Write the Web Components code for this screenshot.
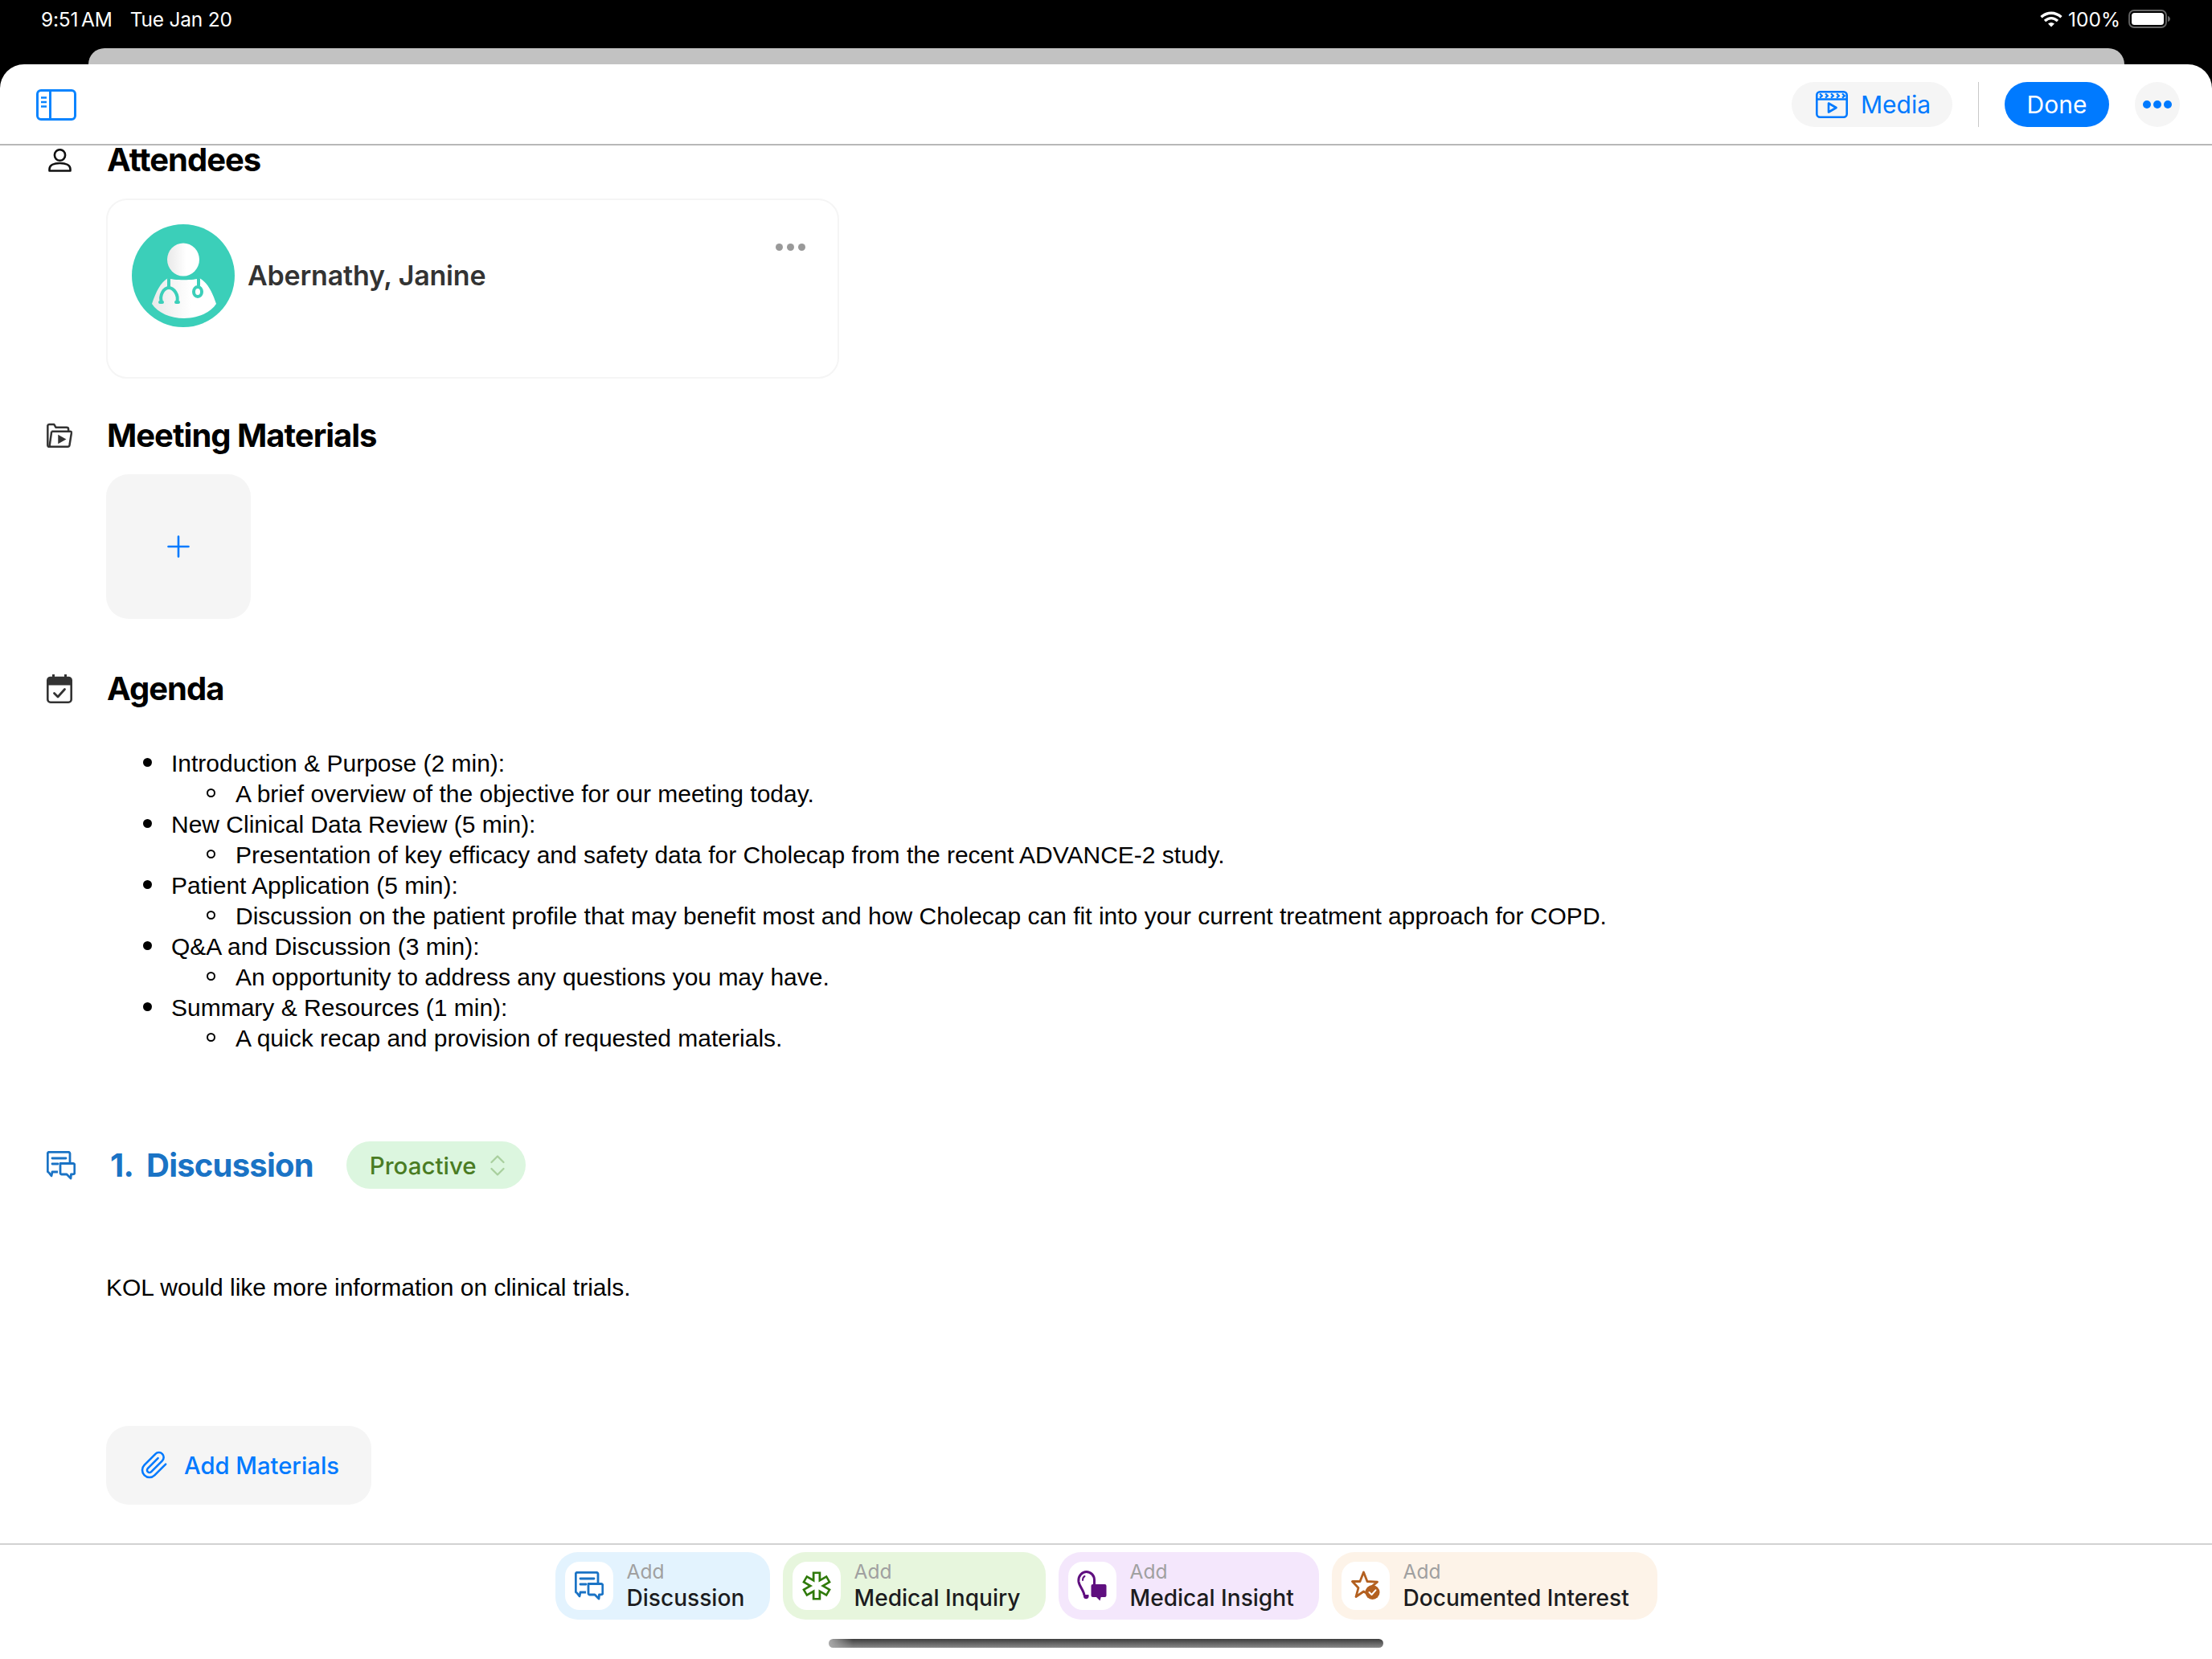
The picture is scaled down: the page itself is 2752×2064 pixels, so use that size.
<!DOCTYPE html>
<html><head><meta charset="utf-8"><title>Meeting</title>
<style>
html,body{margin:0;padding:0;background:#000}
body{width:2752px;height:2064px;overflow:hidden;font-family:Inter,"Liberation Sans",sans-serif}
app-page{display:flex}
</style></head><body>
<app-page>
  <status-bar></status-bar>
  <app-sheet>
    <app-toolbar></app-toolbar>
    <main-scroll>
      <section-head icon="person" style="height:36px;margin-top:0">Attendees</section-head>
      <attendee-card name="Abernathy, Janine"></attendee-card>
      <section-head icon="folder" style="margin-top:53px">Meeting Materials</section-head>
      <add-tile></add-tile>
      <section-head icon="calendar" style="margin-top:69px">Agenda</section-head>
      <agenda-list></agenda-list>
      <discussion-head></discussion-head>
      <note-text>KOL would like more information on clinical trials.</note-text>
      <add-materials></add-materials>
    </main-scroll>
    <add-bar></add-bar>
  </app-sheet>
</app-page>
<script>
const ICONS={
 person:'<svg width="29" height="29" viewBox="0 0 29 29" fill="none" stroke="#111" stroke-width="2.6"><ellipse cx="14.5" cy="8" rx="6.6" ry="6.8"/><path d="M1.5 27.5v-2c0-5 5.5-7.5 13-7.5s13 2.500 13 7.500v2z" stroke-linejoin="round"/></svg>',
 folder:'<svg width="36" height="34" viewBox="0 0 36 34" fill="none" stroke="#333" stroke-width="2.800" stroke-linejoin="round"><path d="M6 32.500H3.500A2 2 0 0 1 1.500 30.500V3A2 2 0 0 1 3.500 1.300H10.500L13 5.500H28A2.500 2.500 0 0 1 30.500 8V11"/><path d="M7 11H33A1.800 1.800 0 0 1 34.800 13L32 30.500A2.500 2.500 0 0 1 29.500 32.500H4.500"/><path d="M7 11L4 32" /><path d="M16 15.500L27.500 22L16 28.500Z" fill="#333" stroke="none"/></svg>',
 calendar:'<svg width="32" height="36" viewBox="0 0 32 36" fill="none"><rect x="1.300" y="4" width="29.400" height="30.700" rx="3.500" stroke="#333" stroke-width="2.600"/><path d="M1.300 13V7.500A3.500 3.500 0 0 1 4.800 4H27.200A3.500 3.500 0 0 1 30.700 7.500V13Z" fill="#333" stroke="#333" stroke-width="1"/><path d="M8.500 0.500V6M23.500 0.500V6" stroke="#333" stroke-width="3" stroke-linecap="round"/><path d="M9.500 23.500L14 28L22.500 18.500" stroke="#333" stroke-width="2.800" stroke-linecap="round" stroke-linejoin="round"/></svg>',
 chat:c=>`<svg style="display:block" width="36" height="36" viewBox="0 0 36 36" fill="none" stroke="${c}" stroke-width="2.800" stroke-linejoin="round"><path d="M14 26H7L6 31L2.500 26.500A1.500 1.500 0 0 1 1.300 25V3A2 2 0 0 1 3.300 1.300H27A2 2 0 0 1 29 3V14"/><path d="M7 9H24M7 16H14" stroke-linecap="round"/><path d="M17 15.500H33A1.800 1.800 0 0 1 34.800 17.300V27A1.800 1.800 0 0 1 33 28.800H30.500L30 34L25 29H19A1.800 1.800 0 0 1 17 27Z" fill="#fff" /></svg>`,
 star:'<svg width="36" height="40" viewBox="0 0 36 40"><path d="M15.500 3L20 14.500L32.500 15.200L23 23L26 33L15.500 27L6 33.500L9 22.500L1.500 14.500L11 14.500Z" fill="none" stroke="#b36020" stroke-width="2.800" stroke-linejoin="round"/><circle cx="26.500" cy="28" r="9" fill="#b36020"/><path d="M22.500 28L25.500 31L30.500 25.300" fill="none" stroke="#fff" stroke-width="2" stroke-linecap="round" stroke-linejoin="round"/></svg>',
 bulb:'<svg width="38" height="38" viewBox="0 0 38 38"><path d="M9 31C8.500 25 3 20 2 14C1 6 7 1.500 11.500 1.500C17 1.500 22 6 21.500 13V18" fill="none" stroke="#5f0f7f" stroke-width="3"/><path d="M9.500 7C7.500 8 7 10 7 12" fill="none" stroke="#5f0f7f" stroke-width="2" stroke-linecap="round"/><path d="M8 30H14.500V33A3.500 3.500 0 0 1 8 33Z" fill="#5f0f7f"/><rect x="17.500" y="17" width="19" height="16" rx="2" fill="#5f0f7f"/><path d="M23 32L28.500 37.500L30 32Z" fill="#5f0f7f"/></svg>',
 asterisk:'<svg width="36" height="36" viewBox="-18 -18 36 36" stroke-linecap="butt"><g stroke="#2f7a0a" stroke-width="10.500"><path d="M0-17.500V17.500M-15.200-8.800L15.200 8.800M-15.200 8.800L15.200-8.800"/></g><g stroke="#fff" stroke-width="5"><path d="M0-15V15M-13-7.500L13 7.500M-13 7.500L13-7.500"/></g></svg>'
};
function def(name,css,html){
  customElements.define(name,class extends HTMLElement{
    constructor(){super();const r=this.attachShadow({mode:'open'});
      r.innerHTML='<style>'+css+'</style>'+(typeof html==='function'?'':html);}
    connectedCallback(){
      if(typeof html==='function'){this.shadowRoot.innerHTML='<style>'+css+'</style>'+html(this)}
    }
  });
}
def('app-page',':host{display:flex;flex-direction:column;width:2752px;height:2064px;background:#000}','<slot></slot>');
def('status-bar',`:host{display:block;height:80px;flex:none;color:#fff;font:400 24.500px Inter,sans-serif}
 .row{height:60px;display:flex;align-items:flex-start;padding:11px 52px 0 51px;box-sizing:border-box}
 .t{line-height:27px;letter-spacing:-.2px;word-spacing:-3px}.d{margin-left:22px;line-height:27px;letter-spacing:-.2px}
 .sp{flex:1}.r{display:flex;align-items:center;height:25px}.p{margin:0 10px 0 7px;letter-spacing:0}
 .peek{height:20px;margin:0 109px 0 110px;background:#c2c2c2;border-radius:24px 24px 0 0}`,
 `<div class="row"><span class="t">9:51 AM</span><span class="d">Tue Jan 20</span><span class="sp"></span><span class="r">
 <svg width="28" height="20" viewBox="0 0 28 20" fill="none" stroke="#fff" stroke-width="3.400"><path d="M1.500 7.300C9 0.500 19 0.500 26.500 7.300M6 12C11 7.500 17 7.500 22 12"/><path d="M10 15.500L14 19.500L18 15.500C15.500 13.500 12.500 13.500 10 15.500Z" fill="#fff" stroke="none"/></svg>
 <span class="p">100%</span>
 <svg width="52" height="23" viewBox="0 0 52 23"><rect x="1" y="1" width="46" height="21" rx="6" fill="none" stroke="#666" stroke-width="1.800"/><rect x="4" y="4" width="40" height="15" rx="3.500" fill="#fff"/><path d="M49 8C51 8.500 52 10 52 11.500C52 13 51 14.500 49 15Z" fill="#666"/></svg></span></div><div class="peek"></div>`);
def('app-sheet',':host{display:flex;flex-direction:column;flex:1;min-height:0;background:#fff;border-radius:30px 30px 0 0;overflow:hidden}','<slot></slot>');
def('app-toolbar',`:host{display:flex;flex:none;box-sizing:border-box;height:101px;border-bottom:2px solid #b8b8b8;padding:22px 40px 0 45px;gap:32px;font:400 30px Inter,sans-serif;color:#007aff}
 .side{margin:9px auto 0 0;display:block}.pill{height:56px;box-sizing:border-box;display:flex;align-items:center;background:#f5f5f5;border-radius:28px}
 .media{width:200px;padding-left:30px;gap:16px}.div{width:1px;height:56px;background:#c9c9c9}.done{width:130px;background:#007aff;color:#fff;justify-content:center}
 .more{width:56px;justify-content:center;gap:3px}.more i{width:10px;height:10px;border-radius:50%;background:#007aff}`,
 `<svg class="side" width="50" height="39" viewBox="0 0 50 39" fill="none" stroke="#0a84ff" stroke-width="3"><rect x="1.500" y="1.500" width="47" height="36" rx="4.500"/><path d="M17.500 1.500V37.500"/><path d="M6 10.500H13M6 16H13M6 21.500H13" stroke-width="2.400"/></svg>
 <div class="pill media"><svg width="40" height="34" viewBox="0 0 40 34" fill="none" stroke="#007aff" stroke-width="2.600" stroke-linejoin="round"><rect x="1.300" y="1.300" width="37.400" height="31.400" rx="4"/><path d="M1.300 10.500H38.700"/><path d="M5 3.500L8 6.200L5 8.700M12 3.500L15 6.200L12 8.700M19 3.500L22 6.200L19 8.700M26 3.500L29 6.200L26 8.700M33 3.500L36 6.200L33 8.700" stroke-width="2.200"/><path d="M16 15.500L25.500 21L16 26.500Z"/></svg><span>Media</span></div>
 <div class="div"></div><div class="pill done">Done</div><div class="pill more"><i></i><i></i><i></i></div>`);
def('main-scroll',':host{display:flex;flex-direction:column;align-items:flex-start;flex:1;min-height:0;padding-left:132px;box-sizing:border-box}','<slot></slot>');
def('section-head',`:host{display:flex;align-items:center;position:relative;height:36px;padding-left:1px;font:700 40px/36px Inter,sans-serif;color:#000;letter-spacing:-1px}
 .i{position:absolute;left:-74px;top:0;width:32px;height:100%;display:flex;align-items:center;justify-content:center;letter-spacing:0}`,
 h=>`<span class="i">${ICONS[h.getAttribute('icon')]}</span><slot></slot>`);
def('attendee-card',`:host{display:flex;box-sizing:border-box;width:912px;height:224px;margin-top:30px;border:2px solid #f5f5f5;border-radius:26px;padding:30px 0 0 30px;position:relative}
 svg{display:block;flex:none}.n{margin:44px 0 0 16px;font:600 34px/40px Inter,sans-serif;color:#333;letter-spacing:-.2px}
 .m{position:absolute;right:40px;top:54px;display:flex;gap:5px}.m i{width:9px;height:9px;border-radius:50%;background:#999}`,
 h=>`<svg width="128" height="128" viewBox="0 0 128 128"><defs><linearGradient id="g" x1="0" x2="1"><stop offset="0" stop-color="#e9e9e9"/><stop offset=".6" stop-color="#fff"/></linearGradient></defs><circle cx="64" cy="64" r="64" fill="#3bcfb9"/><ellipse cx="64" cy="44" rx="20" ry="20.500" fill="url(#g)"/><path d="M45 67C36 72 30 84 25 99C32 110 48 117 65 117C82 117 98 110 105 99C100 84 94 72 84 67C80 70 50 70 45 67Z" fill="url(#g)"/><g fill="none" stroke="#3bcfb9" stroke-width="4" stroke-linecap="round"><path d="M46 68V79M83 68V76"/><path d="M37 97C34 88 40 79 46 79C52 79 59 88 56 97M35 97H38M55 97H58"/><ellipse cx="82" cy="84" rx="5" ry="6"/></g></svg>
 <div class="n">${h.getAttribute('name')}</div><div class="m"><i></i><i></i><i></i></div>`);
def('add-tile',`:host{display:flex;align-items:center;justify-content:center;width:180px;height:180px;margin-top:30px;background:#f5f5f5;border-radius:28px;margin-bottom:0}`,
 `<svg width="28" height="28" viewBox="0 0 28 28" stroke="#007aff" stroke-width="2.600" stroke-linecap="round"><path d="M14 1.500V26.500M1.500 14H26.500"/></svg>`);
def('agenda-list',`:host{display:block;margin-top:56px;font:400 30px/38px "Liberation Sans",Arial,sans-serif;color:#000}
 ul{margin:0;padding:0 0 0 81px;list-style:none}ul ul{padding-left:80px}
 li{position:relative}
 li::before{content:"";position:absolute;left:-35px;top:12px;width:11px;height:11px;border-radius:50%;background:#000}
 ul ul li::before{left:-36px;box-sizing:border-box;background:none;border:2px solid #000}`,
 `<ul>
 <li>Introduction &amp; Purpose (2 min):<ul><li>A brief overview of the objective for our meeting today.</li></ul></li>
 <li>New Clinical Data Review (5 min):<ul><li>Presentation of key efficacy and safety data for Cholecap from the recent ADVANCE-2 study.</li></ul></li>
 <li>Patient Application (5 min):<ul><li>Discussion on the patient profile that may benefit most and how Cholecap can fit into your current treatment approach for COPD.</li></ul></li>
 <li>Q&amp;A and Discussion (3 min):<ul><li>An opportunity to address any questions you may have.</li></ul></li>
 <li>Summary &amp; Resources (1 min):<ul><li>A quick recap and provision of requested materials.</li></ul></li>
 </ul>`);
def('discussion-head',`:host{display:flex;align-items:center;position:relative;height:59px;margin-top:109px;font:700 40px Inter,sans-serif;color:#1a73c5;letter-spacing:-.8px}
 .i{position:absolute;left:-74px;top:12px}.t{margin-left:5px;white-space:pre}.p{margin-left:41px;box-sizing:border-box;width:223px;height:59px;border-radius:30px;background:#dcf6df;color:#4a7c23;font:500 29.500px Inter,sans-serif;letter-spacing:0;display:flex;align-items:center;padding-left:29px;gap:17px}`,
 `<span class="i">${ICONS.chat('#1a73c5')}</span><span class="t">1.  Discussion</span><span class="p">Proactive<svg width="18" height="26" viewBox="0 0 18 26" fill="none" stroke="#a8cf9d" stroke-width="2.200" stroke-linecap="round" stroke-linejoin="round"><path d="M1.500 9L9 1.500L16.500 9M1.500 17L9 24.500L16.500 17"/></svg></span>`);
def('note-text',`:host{display:block;margin-top:104px;font:400 30px/38px "Liberation Sans",Arial,sans-serif;color:#000}`,'<slot></slot>');
def('add-materials',`:host{display:flex;align-items:center;width:330px;height:98px;box-sizing:border-box;margin-top:153px;background:#f5f5f5;border-radius:28px;padding-left:42px;gap:19px;color:#007aff;font:500 29.200px Inter,sans-serif}`,
 `<svg width="36" height="36" viewBox="0 0 24 24" fill="none" stroke="#007aff" stroke-width="1.700" stroke-linecap="round" stroke-linejoin="round"><path d="M21.440 11.050l-9.190 9.190a6 6 0 0 1-8.490-8.490l9.190-9.190a4 4 0 0 1 5.660 5.660l-9.200 9.190a2 2 0 0 1-2.830-2.830l8.490-8.480"/></svg><span>Add Materials</span>`);
def('add-bar',`:host{display:block;flex:none;height:144px;box-sizing:border-box;border-top:2px solid #d2d2d2;padding-top:9px;position:relative}
 .row{display:flex;justify-content:center;gap:16px}
 .home{position:absolute;left:1031px;top:117px;width:690px;height:11px;border-radius:6px;background:linear-gradient(90deg,#aaa,transparent 30px),linear-gradient(#3e3e3e,#8a8a8a)}`,
 `<div class="row"><add-chip label="Discussion" bg="#e3f3fe" w="267">${ICONS.chat('#1a73c5')}</add-chip><add-chip label="Medical Inquiry" bg="#e7f6dd" w="327">${ICONS.asterisk}</add-chip><add-chip label="Medical Insight" bg="#f4e7fc" w="324">${ICONS.bulb}</add-chip><add-chip label="Documented Interest" bg="#fdf3e8" w="405">${ICONS.star}</add-chip></div><div class="home"></div>`);
def('add-chip',`:host{display:flex;box-sizing:border-box;height:84px;border-radius:28px;padding:12px 0 0 12px;flex:none}
 .b{display:flex;align-items:center;justify-content:center;width:60px;height:60px;background:#fff;border-radius:18px;flex:none}
 .x{margin-left:17px;font:500 28.100px/32px Inter,sans-serif;color:#1c1c1e}.a{font-size:24.500px;color:#a0a0a0;font-weight:400;line-height:26px;margin-top:-1px;margin-bottom:4px}`,
 h=>{h.style.background=h.getAttribute('bg');h.style.width=h.getAttribute('w')+'px';return `<span class="b"><slot></slot></span><div class="x"><div class="a">Add</div><div>${h.getAttribute('label')}</div></div>`});
</script>
</body></html>
